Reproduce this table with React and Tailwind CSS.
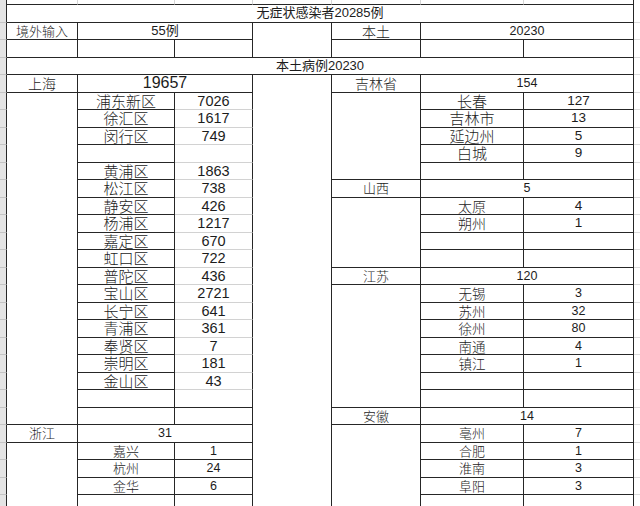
import React from "react";

const A = "w-[71px]";
const B = "w-[97px]";
const C = "w-[78px]";
const M = "w-[79px]";
const D = "w-[89px]";
const E = "w-[103px]";
const F = "w-[110px]";
const BC = "w-[175px]";
const EF = "w-[213px]";
const ALL = "w-[627px]";

const bd = "border-b border-b-[#262626]";
const bl = "border-b border-b-[#d2d2d2]";
const bn = "";

const cjk = "font-['Noto_Sans_CJK_SC','Noto_Sans',sans-serif] font-light";
const num = "font-['Liberation_Sans','Noto_Sans_CJK_SC',sans-serif]";

const t13 = `${cjk} text-[13px]`;
const t14 = `${cjk} text-[14px]`;
const t135 = `${cjk} text-[13.5px]`;
const tBig = `${cjk} text-[15px]`;
const n12 = `${num} text-[12.5px]`;
const n13 = `${num} text-[13.5px]`;
const n145 = `${num} text-[14.5px]`;
const n16 = `${num} text-[16px]`;

const mixed = "font-['Liberation_Sans','Noto_Sans_CJK_SC',sans-serif] text-[13px]";

function Cell({ w, b, text, t }) {
  return (
    <div
      className={`${w} ${b} h-full shrink-0 border-r border-r-[#262626] flex items-center justify-center whitespace-nowrap text-[#1c1c1c]`}
    >
      {text ? <span className={`${t} leading-[14px]`}>{text}</span> : null}
    </div>
  );
}

const c = (w, b, text = "", t = "") => ({ w, b, text, t });

const districts = [
  ["浦东新区", "7026"],
  ["徐汇区", "1617"],
  ["闵行区", "749"],
  ["", ""],
  ["黄浦区", "1863"],
  ["松江区", "738"],
  ["静安区", "426"],
  ["杨浦区", "1217"],
  ["嘉定区", "670"],
  ["虹口区", "722"],
  ["普陀区", "436"],
  ["宝山区", "2721"],
  ["长宁区", "641"],
  ["青浦区", "361"],
  ["奉贤区", "7"],
  ["崇明区", "181"],
  ["金山区", "43"],
];

const left = [];
districts.forEach(([n, v]) => {
  left.push([c(A, bn), c(B, bd, n, tBig), c(C, bl, v, n145)]);
});
left.push([c(A, bn), c(B, bd), c(C, bd)]);
left.push([c(A, bd), c(B, bd), c(C, bd)]);
left.push([c(A, bd, "浙江", t13), c(BC, bd, "31", n12)]);
[
  ["嘉兴", "1"],
  ["杭州", "24"],
  ["金华", "6"],
].forEach(([n, v]) => left.push([c(A, bn), c(B, bd, n, t13), c(C, bd, v, n12)]));
left.push([c(A, bn), c(B, bd), c(C, bl)]);

const right = [];
[
  ["长春", "127"],
  ["吉林市", "13"],
  ["延边州", "5"],
  ["白城", "9"],
].forEach(([n, v]) => right.push([c(D, bn), c(E, bd, n, tBig), c(F, bd, v, n13)]));
right.push([c(D, bd), c(E, bd), c(F, bd)]);
right.push([c(D, bd, "山西", t13), c(EF, bd, "5", n12)]);
[
  ["太原", "4"],
  ["朔州", "1"],
].forEach(([n, v]) => right.push([c(D, bn), c(E, bd, n, t14), c(F, bd, v, n13)]));
right.push([c(D, bn), c(E, bd), c(F, bd)]);
right.push([c(D, bd), c(E, bd), c(F, bd)]);
right.push([c(D, bd, "江苏", t13), c(EF, bd, "120", n12)]);
[
  ["无锡", "3"],
  ["苏州", "32"],
  ["徐州", "80"],
  ["南通", "4"],
  ["镇江", "1"],
].forEach(([n, v]) => right.push([c(D, bn), c(E, bd, n, t135), c(F, bd, v, n12)]));
right.push([c(D, bn), c(E, bd), c(F, bd)]);
right.push([c(D, bd), c(E, bd), c(F, bd)]);
right.push([c(D, bd, "安徽", t13), c(EF, bd, "14", n12)]);
[
  ["亳州", "7"],
  ["合肥", "1"],
  ["淮南", "3"],
  ["阜阳", "3"],
].forEach(([n, v]) => right.push([c(D, bn), c(E, bd, n, t13), c(F, bd, v, n12)]));
right.push([c(D, bn), c(E, bd), c(F, bl)]);

const rows = [
  [c(ALL, bd, "无症状感染者20285例", mixed)],
  [
    c(A, bd, "境外输入", t13),
    c(BC, bd, "55例", mixed),
    c(M, bn),
    c(D, bd, "本土", t14),
    c(EF, bd, "20230", n12),
  ],
  [c(A, bd), c(B, bd), c(C, bd), c(M, bd), c(D, bd), c(E, bd), c(F, bd)],
  [c(ALL, bd, "本土病例20230", mixed)],
  [
    c(A, bd, "上海", t14),
    c(BC, bd, "19657", n16),
    c(M, bn),
    c(D, bd, "吉林省", t14),
    c(EF, bd, "154", n12),
  ],
];
for (let i = 0; i < left.length; i++) {
  rows.push([...left[i], c(M, bn), ...right[i]]);
}

export default function App() {
  return (
    <div className="w-[640px] h-[506px] overflow-hidden bg-white">
      <div className="flex h-[5px]">
        <div className="w-[7px] shrink-0 h-full bg-[#e4e4e4] border-r border-r-[#262626]" />
        <div className="w-[71px] shrink-0 h-full border-r border-r-[#d6d6d6] border-b border-b-[#262626]" />
        <div className="w-[97px] shrink-0 h-full border-r border-r-[#d6d6d6] border-b border-b-[#262626]" />
        <div className="w-[78px] shrink-0 h-full border-r border-r-[#d6d6d6] border-b border-b-[#262626]" />
        <div className="w-[79px] shrink-0 h-full border-r border-r-[#d6d6d6] border-b border-b-[#262626]" />
        <div className="w-[89px] shrink-0 h-full border-r border-r-[#d6d6d6] border-b border-b-[#262626]" />
        <div className="w-[103px] shrink-0 h-full border-r border-r-[#d6d6d6] border-b border-b-[#262626]" />
        <div className="w-[110px] shrink-0 h-full border-r border-r-[#262626] border-b border-b-[#262626]" />
        <div className="w-[6px] shrink-0 h-full" />
      </div>
      {rows.map((cells, i) => (
        <div key={i} className="flex h-[17.5px]">
          <div className="w-[7px] shrink-0 h-full bg-[#e4e4e4] border-r border-r-[#262626] border-b border-b-[#c4c4c4]" />
          {cells.map((cell, j) => (
            <Cell key={j} {...cell} />
          ))}
          <div className="w-[6px] shrink-0 h-full border-b border-b-[#dcdcdc]" />
        </div>
      ))}
    </div>
  );
}
